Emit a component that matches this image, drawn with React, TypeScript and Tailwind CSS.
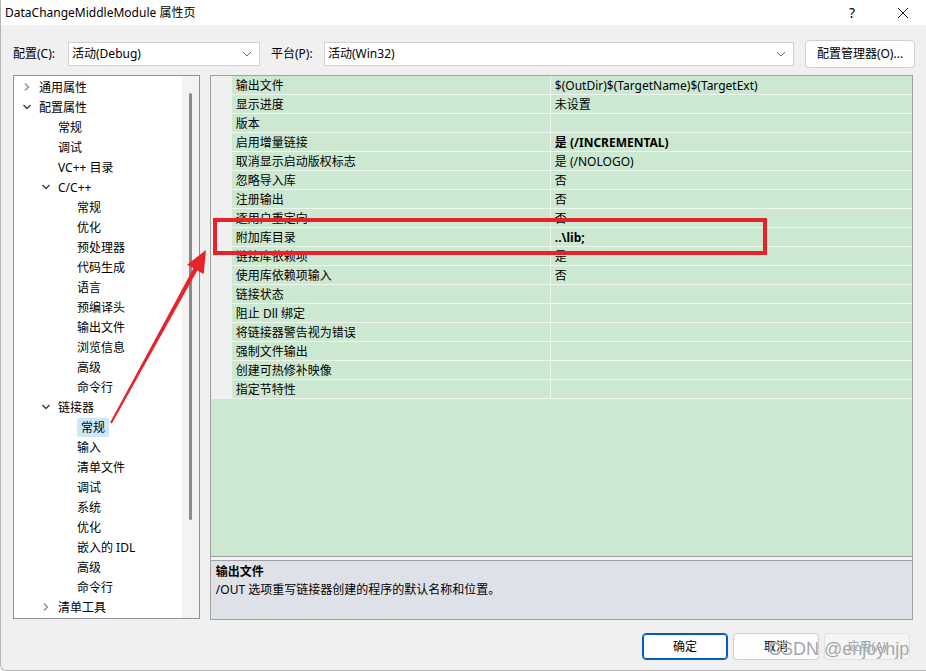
import React from "react";

type TreeItem = { label: string; level: 0 | 1 | 2; open?: boolean; selected?: boolean };

const tree: TreeItem[] = [
  { label: "通用属性", level: 0, open: false },
  { label: "配置属性", level: 0, open: true },
  { label: "常规", level: 1 },
  { label: "调试", level: 1 },
  { label: "VC++ 目录", level: 1 },
  { label: "C/C++", level: 1, open: true },
  { label: "常规", level: 2 },
  { label: "优化", level: 2 },
  { label: "预处理器", level: 2 },
  { label: "代码生成", level: 2 },
  { label: "语言", level: 2 },
  { label: "预编译头", level: 2 },
  { label: "输出文件", level: 2 },
  { label: "浏览信息", level: 2 },
  { label: "高级", level: 2 },
  { label: "命令行", level: 2 },
  { label: "链接器", level: 1, open: true },
  { label: "常规", level: 2, selected: true },
  { label: "输入", level: 2 },
  { label: "清单文件", level: 2 },
  { label: "调试", level: 2 },
  { label: "系统", level: 2 },
  { label: "优化", level: 2 },
  { label: "嵌入的 IDL", level: 2 },
  { label: "高级", level: 2 },
  { label: "命令行", level: 2 },
  { label: "清单工具", level: 1, open: false },
];

const rows: { name: string; value: string; bold?: boolean }[] = [
  { name: "输出文件", value: "$(OutDir)$(TargetName)$(TargetExt)" },
  { name: "显示进度", value: "未设置" },
  { name: "版本", value: "" },
  { name: "启用增量链接", value: "是 (/INCREMENTAL)", bold: true },
  { name: "取消显示启动版权标志", value: "是 (/NOLOGO)" },
  { name: "忽略导入库", value: "否" },
  { name: "注册输出", value: "否" },
  { name: "逐用户重定向", value: "否" },
  { name: "附加库目录", value: "..\\lib;", bold: true },
  { name: "链接库依赖项", value: "是" },
  { name: "使用库依赖项输入", value: "否" },
  { name: "链接状态", value: "" },
  { name: "阻止 Dll 绑定", value: "" },
  { name: "将链接器警告视为错误", value: "" },
  { name: "强制文件输出", value: "" },
  { name: "创建可热修补映像", value: "" },
  { name: "指定节特性", value: "" },
];

const indent = ["pl-[4px]", "pl-[23px]", "pl-[42px]"];

function Chevron({ open }: { open: boolean }) {
  return open ? (
    <svg width="10" height="10" viewBox="0 0 10 10">
      <polyline points="1.5,3 5,6.5 8.5,3" fill="none" stroke="#3a3a3a" strokeWidth="1.4" />
    </svg>
  ) : (
    <svg width="10" height="10" viewBox="0 0 10 10">
      <polyline points="3,1.5 6.5,5 3,8.5" fill="none" stroke="#8a8a8a" strokeWidth="1.3" />
    </svg>
  );
}

function ComboArrow() {
  return (
    <svg width="10" height="6" viewBox="0 0 10 6">
      <polyline points="1,1 5,5 9,1" fill="none" stroke="#6a6a6a" strokeWidth="1" />
    </svg>
  );
}

export default function App() {
  return (
    <div
      className="relative w-[926px] h-[671px] overflow-hidden bg-[#f0f0f0] text-[12px] text-black border-l border-b border-[#b5b5b5] rounded-bl-[6px]"
      style={{ fontFamily: '"Noto Sans", "Noto Sans CJK SC", sans-serif' }}
    >
      {/* title bar */}
      <div className="flex items-center h-[25px] bg-white pl-[4px]">
        <span className="text-[12px] leading-none">DataChangeMiddleModule 属性页</span>
        <span className="ml-auto text-[14px] leading-none w-[12px] mr-[36px]">?</span>
        <svg width="12" height="12" viewBox="0 0 12 12" className="mr-[17px]">
          <line x1="1" y1="1" x2="11" y2="11" stroke="#222" strokeWidth="1" />
          <line x1="11" y1="1" x2="1" y2="11" stroke="#222" strokeWidth="1" />
        </svg>
      </div>

      {/* configuration row */}
      <div className="flex items-center h-[28px] mt-[15px] pl-[12px]">
        <span className="w-[55px]">配置(C):</span>
        <div className="flex items-center w-[192px] h-[24px] bg-white border border-[#d0d0d0] pl-[3px] pr-[7px]">
          <span>活动(Debug)</span>
          <span className="ml-auto"><ComboArrow /></span>
        </div>
        <span className="w-[53px] ml-[11px]">平台(P):</span>
        <div className="flex items-center w-[470px] h-[24px] bg-white border border-[#d0d0d0] pl-[3px] pr-[7px]">
          <span>活动(Win32)</span>
          <span className="ml-auto"><ComboArrow /></span>
        </div>
        <button className="ml-[11px] w-[110px] h-[28px] bg-[#fdfdfd] border border-[#d0d0d0] rounded-[4px] text-[12px]">
          配置管理器(O)...
        </button>
      </div>

      {/* main */}
      <div className="flex mt-[7px] pl-[12px]">
        {/* tree */}
        <div className="flex w-[187px] h-[544px] bg-white border border-[#8c9099]">
          <div className="flex-1 flex flex-col pt-[1px]">
            {tree.map((t, i) => (
              <div key={i} className={`flex items-center h-[20px] shrink-0 ${indent[t.level]}`}>
                <span className="w-[18px] flex justify-center">
                  {t.open !== undefined && <Chevron open={t.open} />}
                </span>
                <span
                  className={`ml-[3px] leading-[19px] ${
                    t.selected ? "bg-[#cce8ff] px-[4px] -ml-[1px] rounded-[2px]" : ""
                  }`}
                >
                  {t.label}
                </span>
              </div>
            ))}
          </div>
          <div className="w-[17px] bg-[#f3f3f3] flex justify-center pt-[17px]">
            <div className="w-[3px] h-[427px] bg-[#8a8a8a] rounded-full" />
          </div>
        </div>

        {/* property grid */}
        <div className="ml-[10px] flex flex-col w-[704px] h-[545px] border border-[#a0a0a0] mr-[13px]">
          <div className="flex flex-col h-[481px] border-b border-[#a0a0a0] bg-[#cde8d0]">
            {rows.map((r, i) => (
              <div key={i} className="flex h-[19px] shrink-0">
                <div className="w-[21px] bg-[#f0f0f0]" />
                <div className="flex flex-1 border-b border-[#eef6ef]">
                  <div className="w-[318px] pl-[4px] leading-[20px] whitespace-nowrap">{r.name}</div>
                  <div
                    className={`flex-1 border-l border-[#eef6ef] pl-[4px] leading-[20px] whitespace-nowrap ${
                      r.bold ? "font-bold" : ""
                    }`}
                  >
                    {r.value}
                  </div>
                </div>
              </div>
            ))}
            <div className="flex-1" />
          </div>
          <div className="h-[3px] bg-[#f4f4f4]" />
          <div className="flex-1 border-t border-[#a0a0a0] bg-[#dfe1e8] px-[5px] pt-[2px]">
            <div className="font-bold leading-[18px]">输出文件</div>
            <div className="leading-[18px]">/OUT 选项重写链接器创建的程序的默认名称和位置。</div>
          </div>
        </div>
      </div>

      {/* footer buttons */}
      <div className="flex justify-end gap-[5px] mt-[13px] pr-[16px]">
        <button className="w-[86px] h-[27px] bg-white border border-[#005fb8] rounded-[4px] shadow-[inset_0_0_0_1px_#005fb8]">
          确定
        </button>
        <button className="w-[86px] h-[27px] bg-[#fdfdfd] border border-[#d0d0d0] rounded-[4px]">取消</button>
        <button className="w-[86px] h-[27px] bg-[#f5f5f5] border border-[#e2e2e2] rounded-[4px] text-[#9a9a9a]">
          应用(A)
        </button>
      </div>

      {/* annotations */}
      <div className="absolute left-[212px] top-[218px] w-[554px] h-[37px] border-[4px] border-[#e8222a] pointer-events-none" />
      <svg className="absolute left-0 top-0 pointer-events-none" width="926" height="671">
        <polygon
          points="109.1,422.5 192.5,268.2 186.1,264.7 205,250 202.7,273.9 196.3,270.4 110.9,423.5"
          fill="#e8222a"
        />
      </svg>
      <div
        className="absolute left-[767px] top-[638px] text-[18px] leading-[22px] text-[#a6a6a6] pointer-events-none"
        style={{ fontFamily: '"Liberation Sans", Arial, sans-serif', textShadow: "0 0 1px #ffffff" }}
      >
        CSDN @enjoyhjp
      </div>
    </div>
  );
}
